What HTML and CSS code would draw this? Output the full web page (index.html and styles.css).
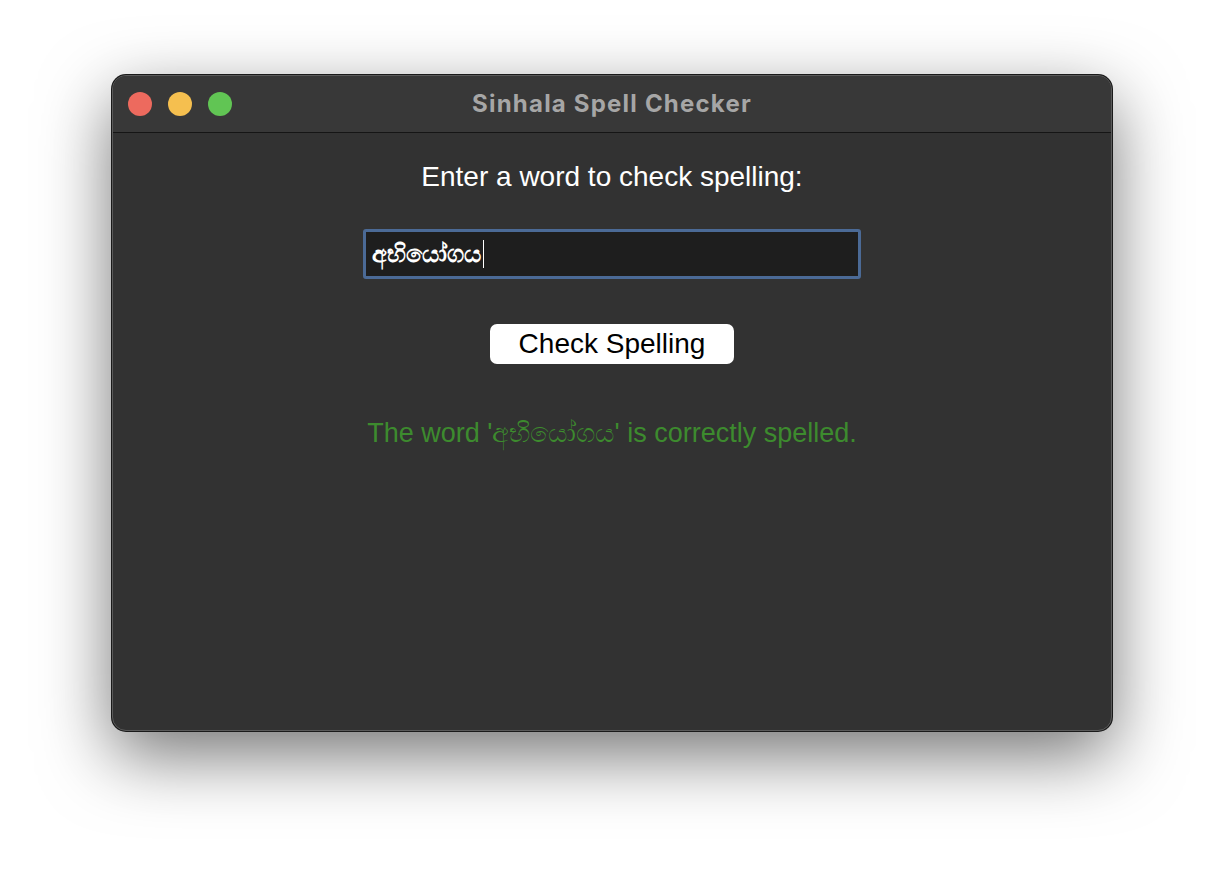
FILE: index.html
```html
<!DOCTYPE html>
<html lang="en">
<head>
<meta charset="utf-8">
<title>Sinhala Spell Checker</title>
<link rel="stylesheet" href="styles.css">
</head>
<body>
<div class="window">
  <div class="titlebar">
    <div class="lights">
      <span class="light red"></span>
      <span class="light yellow"></span>
      <span class="light green"></span>
    </div>
    <div class="title">Sinhala Spell Checker</div>
  </div>
  <div class="content">
    <div class="label">Enter a word to check spelling:</div>
    <div class="input"><span class="value">අභියෝගය</span><span class="caret"></span></div>
    <button class="btn">Check Spelling</button>
    <div class="result">The word 'අභියෝගය' is correctly spelled.</div>
  </div>
</div>
</body>
</html>
```
FILE: styles.css
```css
html, body {
  margin: 0;
  padding: 0;
  background: #ffffff;
}
body {
  width: 1224px;
  height: 880px;
  padding-top: 75px;
  box-sizing: border-box;
  font-family: "Liberation Sans", Arial, "Noto Sans", sans-serif;
  overflow: hidden;
}
.window {
  width: 1000px;
  height: 656px;
  margin: 0 auto;
  box-sizing: border-box;
  border-radius: 14px;
  background: #323232;
  border: 1px solid #5a5a5a;
  box-shadow: 0 0 0 1px #1a1a1a, 0 24px 70px rgba(0, 0, 0, 0.55);
  overflow: hidden;
  display: flex;
  flex-direction: column;
}
.titlebar {
  height: 56px;
  background: #383838;
  border-bottom: 1px solid #151515;
  position: relative;
  display: flex;
  align-items: center;
  justify-content: center;
  flex-shrink: 0;
}
.lights {
  position: absolute;
  left: 15px;
  top: 16px;
  display: flex;
  gap: 16px;
}
.light {
  width: 24px;
  height: 24px;
  border-radius: 50%;
  display: block;
}
.red { background: #ed6a5e; }
.yellow { background: #f5bf4f; }
.green { background: #61c554; }
.title {
  color: #a6a6a6;
  font-family: Inter, "Liberation Sans", sans-serif;
  font-weight: 700;
  font-size: 24px;
  letter-spacing: 1.2px;
  margin-top: -2px;
}
.content {
  flex: 1;
  display: flex;
  flex-direction: column;
  align-items: center;
  padding-top: 28px;
}
.label {
  color: #ffffff;
  font-size: 28px;
  line-height: 32px;
  height: 32px;
}
.input {
  margin-top: 36px;
  width: 498px;
  height: 50px;
  box-sizing: border-box;
  border: 3px solid #4b6a96;
  border-radius: 3px;
  background: #1e1e1e;
  display: flex;
  align-items: center;
  padding-left: 6px;
  color: #ffffff;
  font-size: 24px;
  font-weight: bold;
}
.caret {
  display: inline-block;
  width: 1px;
  height: 28px;
  background: #ffffff;
  margin-left: 2px;
}
.btn {
  margin-top: 45px;
  width: 244px;
  height: 40px;
  border: none;
  border-radius: 7px;
  background: #ffffff;
  color: #000000;
  font-family: "Liberation Sans", Arial, sans-serif;
  font-size: 28px;
  padding: 0;
}
.result {
  margin-top: 53px;
  color: #3d8b2e;
  font-size: 27px;
  line-height: 32px;
}
```
